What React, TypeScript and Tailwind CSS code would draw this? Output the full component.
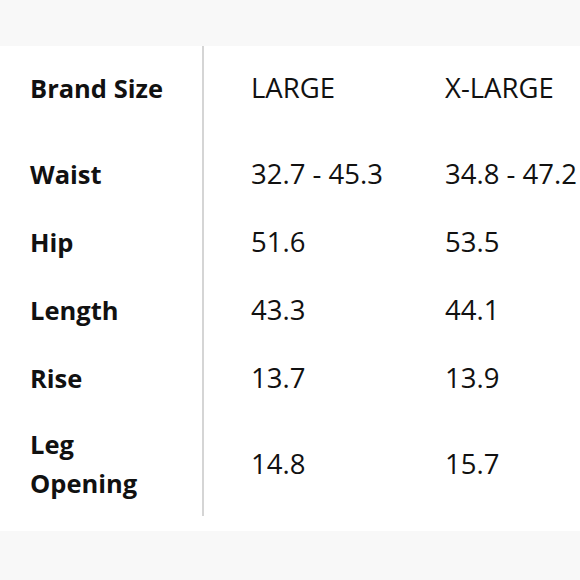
const rows = [
  { label: ["Waist"], large: "32.7 - 45.3", xlarge: "34.8 - 47.2", h: "h-[68px]" },
  { label: ["Hip"], large: "51.6", xlarge: "53.5", h: "h-[68px]" },
  { label: ["Length"], large: "43.3", xlarge: "44.1", h: "h-[68px]" },
  { label: ["Rise"], large: "13.7", xlarge: "13.9", h: "h-[68px]" },
  { label: ["Leg", "Opening"], large: "14.8", xlarge: "15.7", h: "h-[104px]" },
];

export default function App() {
  return (
    <div
      className="w-[580px] h-[580px] bg-[#f8f8f8] pt-[46px] overflow-hidden text-[#111]"
      style={{ fontFamily: '"Open Sans", "Noto Sans", sans-serif' }}
    >
      <div className="bg-white pb-[15px]">
        <div className="flex">
          <div className="w-[204px] shrink-0 border-r-2 border-[#d5d5d5] pl-[30px] text-[25.5px]">
            <div className="h-[84px] flex items-center font-bold">Brand Size</div>
            <div className="h-[10px]" />
            {rows.map((r) => (
              <div key={r.label.join(" ")} className={`${r.h} flex flex-col justify-center font-bold leading-[39px]`}>
                {r.label.map((l) => (
                  <span key={l}>{l}</span>
                ))}
              </div>
            ))}
          </div>
          <div className="w-[241px] shrink-0 pl-[47px] text-[27.5px]">
            <div className="h-[84px] flex items-center">LARGE</div>
            <div className="h-[10px]" />
            {rows.map((r) => (
              <div key={r.large} className={`${r.h} flex items-center whitespace-nowrap`}>
                {r.large}
              </div>
            ))}
          </div>
          <div className="flex-1 whitespace-nowrap text-[27.5px]">
            <div className="h-[84px] flex items-center">X-LARGE</div>
            <div className="h-[10px]" />
            {rows.map((r) => (
              <div key={r.xlarge} className={`${r.h} flex items-center`}>
                {r.xlarge}
              </div>
            ))}
          </div>
        </div>
      </div>
    </div>
  );
}
